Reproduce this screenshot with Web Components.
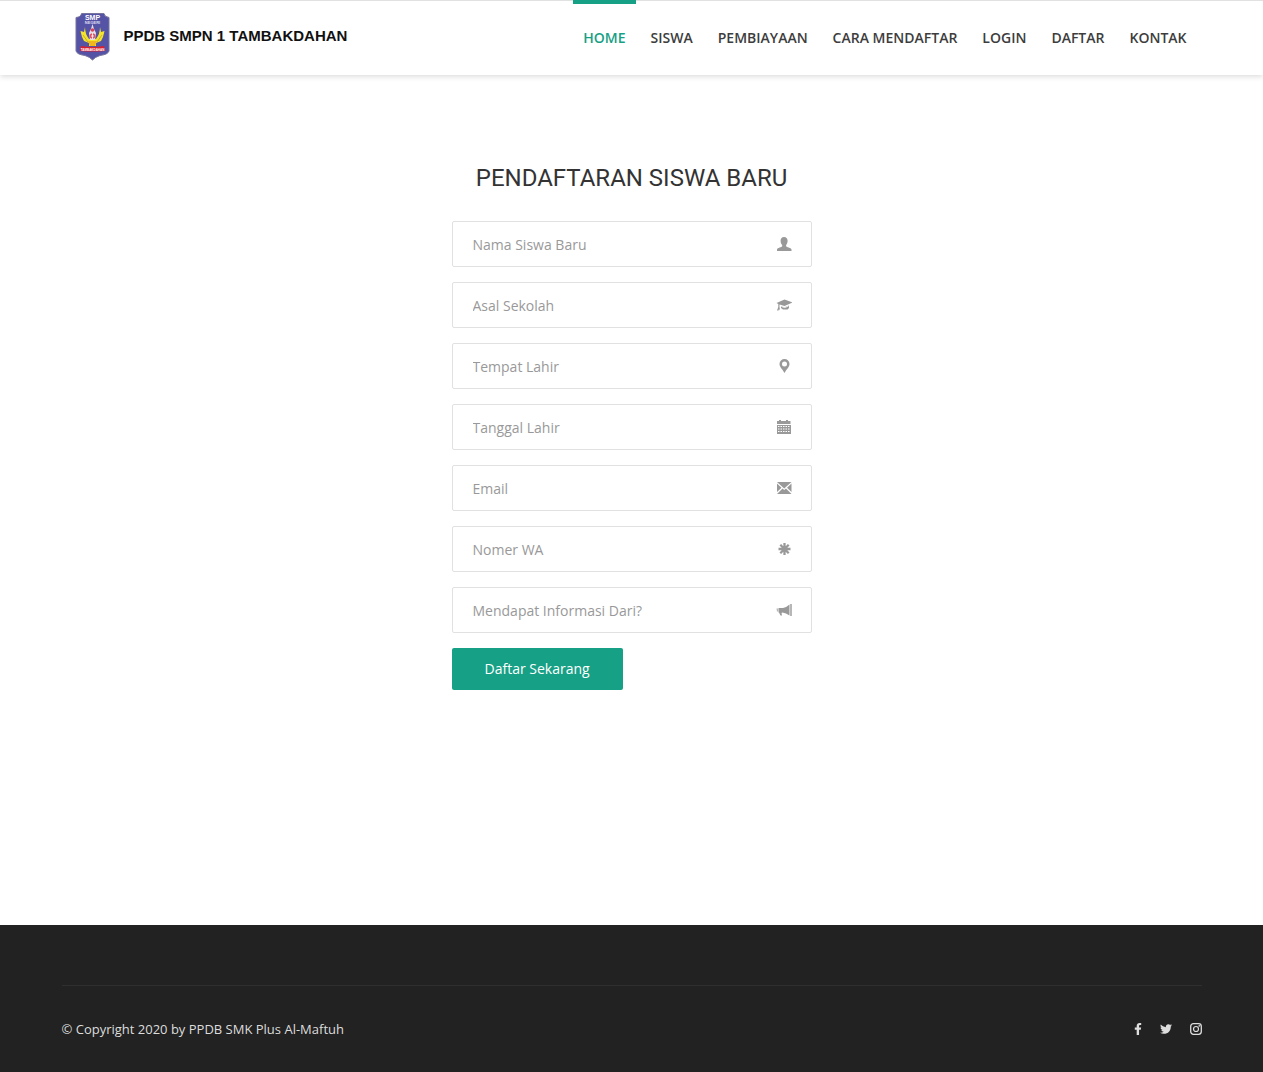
<!DOCTYPE html>
<html lang="id">
<head>
<meta charset="utf-8">
<meta name="viewport" content="width=device-width, initial-scale=1">
<title>PPDB SMPN 1 Tambakdahan</title>
<style>
    body {
        margin: 0;
        font-family: "Open Sans", "Noto Sans", sans-serif;
        font-size: 14px;
        background: #fff;
        --accent: #16a085;
    }
</style>
</head>
<body>

<template id="ppdb-page-template">
    <style>
        :host {
            display: flex;
            flex-direction: column;
            min-height: 100vh;
        }
        main {
            flex: 1;
            padding: 85px 16px 60px;
        }
    </style>
    <slot name="header"></slot>
    <main><slot></slot></main>
    <slot name="footer"></slot>
</template>

<template id="ppdb-header-template">
    <style>
        :host {
            display: block;
            border-top: 1px solid #e1e1e1;
            box-shadow: 0 1px 6px rgba(0, 0, 0, 0.17);
            background: #fff;
        }
        .container {
            display: flex;
            justify-content: space-between;
            max-width: 1140px;
            min-height: 74px;
            margin: 0 auto;
        }
        nav {
            display: flex;
            gap: 5px;
            margin-right: 5px;
        }
    </style>
    <header class="container">
        <slot name="logo"></slot>
        <nav><slot></slot></nav>
    </header>
</template>

<template id="ppdb-logo-template">
    <style>
        :host {
            display: block;
            margin: 11px 0 0 13px;
        }
        a {
            display: flex;
            align-items: center;
            gap: 14px;
            color: #111;
            text-decoration: none;
            font: bold 15px "Liberation Sans", Arial, sans-serif;
            white-space: nowrap;
        }
        svg {
            display: block;
            flex: none;
        }
        span {
            padding-bottom: 2px;
        }
    </style>
    <a href="#">
        <svg width="35" height="49" viewBox="0 0 35 49" aria-hidden="true">
            <path d="M6.500 1.500H29Q29.500 5 34 5.500V39Q33 42.500 25 43.500Q20 45 17.500 48Q15 45 10 43.500Q2 42.500 1 39V5.500Q6 5 6.500 1.500Z" fill="#5553a5" stroke="#77759c" stroke-width="1"/>
            <text x="17.500" y="8" fill="#fff" font-family="Liberation Sans" font-size="7" font-weight="bold" text-anchor="middle">SMP</text>
            <text x="17.500" y="12" fill="#dcdcf0" font-family="Liberation Sans" font-size="4" font-weight="bold" text-anchor="middle">NEGERI</text>
            <path d="M10 15L9 20L5.500 19L7 25L9 29L14 31V34H21V31L26 29L28 25L29.500 19L26 20L25 15Q25 22 21 27H14Q10 22 10 15Z" fill="#f4e42c"/>
            <path d="M8 23L13 30M27 23L22 30" stroke="#b79b2c" stroke-width="0.700"/>
            <path d="M17.500 12L19 17L21 21L20 28H15L14 21L16 17Z" fill="#e9dfe7"/>
            <circle cx="17.500" cy="18" r="1.800" fill="#d94254"/>
            <circle cx="17.500" cy="24" r="2.800" fill="#df5360"/>
            <path d="M16 24H19M17.500 21V27" stroke="#fff" stroke-width="0.800"/>
            <path d="M13 29H22L20 34H15Z" fill="#f1b51e"/>
            <path d="M6 34Q17.500 36 29 34L30 39Q17.500 40 5 39Z" fill="#dd1f2d"/>
            <text x="17.500" y="38.500" fill="#fff" font-family="Liberation Sans" font-size="3" font-weight="bold" text-anchor="middle">TAMBAKDAHAN</text>
        </svg>
        <span><slot></slot></span>
    </a>
</template>

<template id="ppdb-nav-item-template">
    <style>
        :host {
            display: block;
            margin-top: -1px;
        }
        a {
            display: block;
            padding: 24px 10px;
            border-top: 4px solid transparent;
            color: #3d3d3d;
            font-weight: 600;
            line-height: 20px;
            text-decoration: none;
            text-transform: uppercase;
            white-space: nowrap;
        }
        :host([active]) a {
            border-color: var(--accent);
            color: var(--accent);
        }
        a:hover {
            color: var(--accent);
        }
    </style>
    <a><slot></slot></a>
</template>

<template id="ppdb-form-template">
    <style>
        :host {
            display: block;
            max-width: 360px;
            margin: 0 auto;
        }
        h2 {
            margin: 0 0 25px;
            color: #333;
            font: 400 24px/36px Roboto, sans-serif;
            text-align: center;
            text-transform: uppercase;
        }
        form {
            display: flex;
            flex-direction: column;
            align-items: stretch;
            gap: 15px;
        }
        button {
            align-self: flex-start;
            height: 42px;
            padding: 0 33px 2px;
            border: 0;
            border-radius: 2px;
            background: var(--accent);
            color: #fff;
            font: inherit;
            cursor: pointer;
        }
    </style>
    <h2><slot name="title"></slot></h2>
    <form>
        <slot></slot>
        <button type="submit">Daftar Sekarang</button>
    </form>
</template>

<template id="ppdb-field-template">
    <style>
        :host {
            display: block;
        }
        .field {
            display: flex;
            align-items: center;
            height: 44px;
            padding: 0 19px 0 20px;
            border: 1px solid #e1e1e1;
            border-radius: 2px;
            background: #fff;
        }
        .field:focus-within {
            border-color: var(--accent);
        }
        input {
            flex: 1;
            min-width: 0;
            height: 44px;
            padding: 0;
            border: 0;
            outline: 0;
            background: none;
            color: #444;
            font: inherit;
        }
        input::placeholder {
            color: #999;
            opacity: 1;
        }
        svg {
            flex: none;
            width: 16px;
            height: 16px;
            fill: #999;
        }
    </style>
    <div class="field">
        <input type="text">
        <svg viewBox="0 0 16 16" aria-hidden="true"></svg>
    </div>
</template>

<template id="ppdb-footer-template">
    <style>
        :host {
            display: block;
            padding: 60px 16px 32px;
            background: #222;
            color: #ddd;
            font-size: 13px;
        }
        footer {
            display: flex;
            align-items: center;
            justify-content: space-between;
            max-width: 1140px;
            margin: 0 auto;
            padding-top: 33px;
            border-top: 1px solid #2f2f2f;
            line-height: 21px;
        }
        .social {
            display: flex;
            gap: 18px;
            padding-bottom: 2px;
        }
    </style>
    <footer>
        <span><slot></slot></span>
        <div class="social"><slot name="social"></slot></div>
    </footer>
</template>

<template id="ppdb-social-template">
    <style>
        :host {
            display: block;
        }
        a {
            display: block;
            color: #ddd;
        }
        svg {
            display: block;
            height: 12px;
            fill: currentColor;
        }
    </style>
    <a href="#"></a>
</template>

<ppdb-page>
    <ppdb-header slot="header">
        <ppdb-logo slot="logo">PPDB SMPN 1 TAMBAKDAHAN</ppdb-logo>
        <ppdb-nav-item href="#home" active>Home</ppdb-nav-item>
        <ppdb-nav-item href="#siswa">Siswa</ppdb-nav-item>
        <ppdb-nav-item href="#pembiayaan">Pembiayaan</ppdb-nav-item>
        <ppdb-nav-item href="#cara">Cara Mendaftar</ppdb-nav-item>
        <ppdb-nav-item href="#login">Login</ppdb-nav-item>
        <ppdb-nav-item href="#daftar">Daftar</ppdb-nav-item>
        <ppdb-nav-item href="#kontak">Kontak</ppdb-nav-item>
    </ppdb-header>

    <ppdb-form>
        <span slot="title">Pendaftaran Siswa Baru</span>
        <ppdb-field label="Nama Siswa Baru" icon="user"></ppdb-field>
        <ppdb-field label="Asal Sekolah" icon="school"></ppdb-field>
        <ppdb-field label="Tempat Lahir" icon="marker"></ppdb-field>
        <ppdb-field label="Tanggal Lahir" icon="calendar"></ppdb-field>
        <ppdb-field label="Email" icon="envelope" type="email"></ppdb-field>
        <ppdb-field label="Nomer WA" icon="asterisk" type="tel"></ppdb-field>
        <ppdb-field label="Mendapat Informasi Dari?" icon="bullhorn"></ppdb-field>
    </ppdb-form>

    <ppdb-footer slot="footer">
        © Copyright 2020 by PPDB SMK Plus Al-Maftuh
        <ppdb-social slot="social" name="Facebook"></ppdb-social>
        <ppdb-social slot="social" name="Twitter"></ppdb-social>
        <ppdb-social slot="social" name="Instagram"></ppdb-social>
    </ppdb-footer>
</ppdb-page>

<script>

// field icons, all on a 16x16 grid
const fieldIcons = {
    user: '<path d="M8 1C5.700 1 4.400 2.700 4.600 5C4.700 6.800 5.200 8 6.200 9V10.300C5.700 11.300 1.500 11.700 1 13.500V15H15.500V13.500C15 11.700 10.600 11.300 10.100 10.300V9C11 8 11.500 6.800 11.600 5C11.800 2.700 10.400 1 8 1Z"/>',
    school: '<path d="M8.500 2.500L0.500 6L2.300 7V10L1 13.500H2.500L3 12L4 13.500L3.500 10V7.500L8.500 9L16.500 5.500Z"/><path d="M5 9.200L8.500 10.200L13 8.500V11L11.500 12.500H7L5 11Z"/><path d="M5.500 9.500Q8.500 12 12.500 9" fill="none" stroke="#fff" stroke-width="0.800"/>',
    marker: '<path fill-rule="evenodd" d="M8.500 1A5 5 0 0 0 3.500 6C3.500 9 6 10.500 8.500 15C11 10.500 13.500 9 13.500 6A5 5 0 0 0 8.500 1ZM8.500 3.500A2.500 2.500 0 1 1 8.500 8.500A2.500 2.500 0 1 1 8.500 3.500Z"/>',
    calendar: '<path d="M1 2H3V1H5V2H10V1H12V2H14.500V5H1ZM1 6H15V15H1Z"/><path d="M2 7.500H14M2 10H14M2 12.500H14" stroke="#fff" stroke-width="1" stroke-dasharray="1.500 1"/>',
    envelope: '<path d="M1 2H15.500L8.200 8.500ZM1 3.500L5.500 7.700L1 12ZM15.500 3.500V12L11 7.700ZM1 14L6.500 8.500L8.200 10L10 8.500L15.500 14Z"/>',
    asterisk: '<path d="M8.500 2V14M2.500 8H14.500M4.300 3.800L12.700 12.200M12.700 3.800L4.300 12.200" stroke="#999" stroke-width="2.300"/>',
    bullhorn: '<path d="M2.500 6H7Q11 5 13.500 2.500V13.500Q10 11 6.500 10.500L5.500 11L6 13.500H4.500L3 10.500H2.500Z"/><path d="M14 2H16V14H14ZM0.500 6.500H2V9.500H1Z" opacity="0.700"/>'
};

const socialIcons = {
    Facebook: '<svg width="8" viewBox="0 0 320 512"><path d="M279.14 288l14.22-92.66h-88.91v-60.13c0-25.35 12.42-50.06 52.24-50.06h40.42V6.260S260.430 0 225.360 0c-73.220 0-121.080 44.380-121.080 124.720v70.620H22.890V288h81.390v224h100.170V288z"/></svg>',
    Twitter: '<svg width="12" viewBox="0 0 512 512"><path d="M459.37 151.716c.325 4.548.325 9.097.325 13.645 0 138.720-105.583 298.558-298.558 298.558-59.452 0-114.680-17.219-161.137-47.106 8.447.974 16.568 1.299 25.340 1.299 49.055 0 94.213-16.568 130.274-44.832-46.132-.975-84.792-31.188-98.112-72.772 6.498.974 12.995 1.624 19.818 1.624 9.421 0 18.843-1.300 27.614-3.573-48.081-9.747-84.143-51.980-84.143-102.985v-1.299c13.969 7.797 30.214 12.670 47.431 13.319-28.264-18.843-46.781-51.005-46.781-87.391 0-19.492 5.197-37.360 14.294-52.954 51.655 63.675 129.300 105.258 216.365 109.807-1.624-7.797-2.599-15.918-2.599-24.040 0-57.828 46.782-104.934 104.934-104.934 30.213 0 57.502 12.670 76.670 33.137 23.715-4.548 46.456-13.320 66.599-25.340-7.798 24.366-24.366 44.833-46.132 57.827 21.117-2.273 41.584-8.122 60.426-16.243-14.292 20.791-32.161 39.308-52.628 54.253z"/></svg>',
    Instagram: '<svg width="12" viewBox="0 0 12 12"><rect x="0.700" y="0.700" width="10.600" height="10.600" rx="2.700" fill="none" stroke="currentColor" stroke-width="1.300"/><circle cx="6" cy="6" r="2.500" fill="none" stroke="currentColor" stroke-width="1.200"/><circle cx="9.200" cy="2.900" r="0.800"/></svg>'
};

class PpdbElement extends HTMLElement {

    connectedCallback(){
        if(this.shadowRoot){
            return;
        }
        const shadowRoot = this.attachShadow({mode: 'open'});
        const template = document.querySelector('#' + this.localName + '-template');
        shadowRoot.appendChild(template.content.cloneNode(true));
        this.setup(shadowRoot);
    }

    setup(shadowRoot){}
}

class PpdbNavItem extends PpdbElement {

    setup(shadowRoot){
        const link = shadowRoot.querySelector('a');
        link.href = this.getAttribute('href');
        if(this.hasAttribute('active')){
            link.setAttribute('aria-current', 'page');
        }
    }
}

class PpdbForm extends PpdbElement {

    setup(shadowRoot){
        shadowRoot.querySelector('form').addEventListener('submit', function(event) {
            event.preventDefault();
        });
    }
}

class PpdbField extends PpdbElement {

    setup(shadowRoot){
        const input = shadowRoot.querySelector('input');
        const label = this.getAttribute('label');
        input.type = this.getAttribute('type') || 'text';
        input.placeholder = label;
        input.setAttribute('aria-label', label);
        shadowRoot.querySelector('svg').innerHTML = fieldIcons[this.getAttribute('icon')];
    }
}

class PpdbSocial extends PpdbElement {

    setup(shadowRoot){
        const link = shadowRoot.querySelector('a');
        const name = this.getAttribute('name');
        link.setAttribute('aria-label', name);
        link.innerHTML = socialIcons[name];
    }
}

window.customElements.define('ppdb-page', class extends PpdbElement {});
window.customElements.define('ppdb-header', class extends PpdbElement {});
window.customElements.define('ppdb-logo', class extends PpdbElement {});
window.customElements.define('ppdb-nav-item', PpdbNavItem);
window.customElements.define('ppdb-form', PpdbForm);
window.customElements.define('ppdb-field', PpdbField);
window.customElements.define('ppdb-footer', class extends PpdbElement {});
window.customElements.define('ppdb-social', PpdbSocial);

</script>
</body>
</html>
